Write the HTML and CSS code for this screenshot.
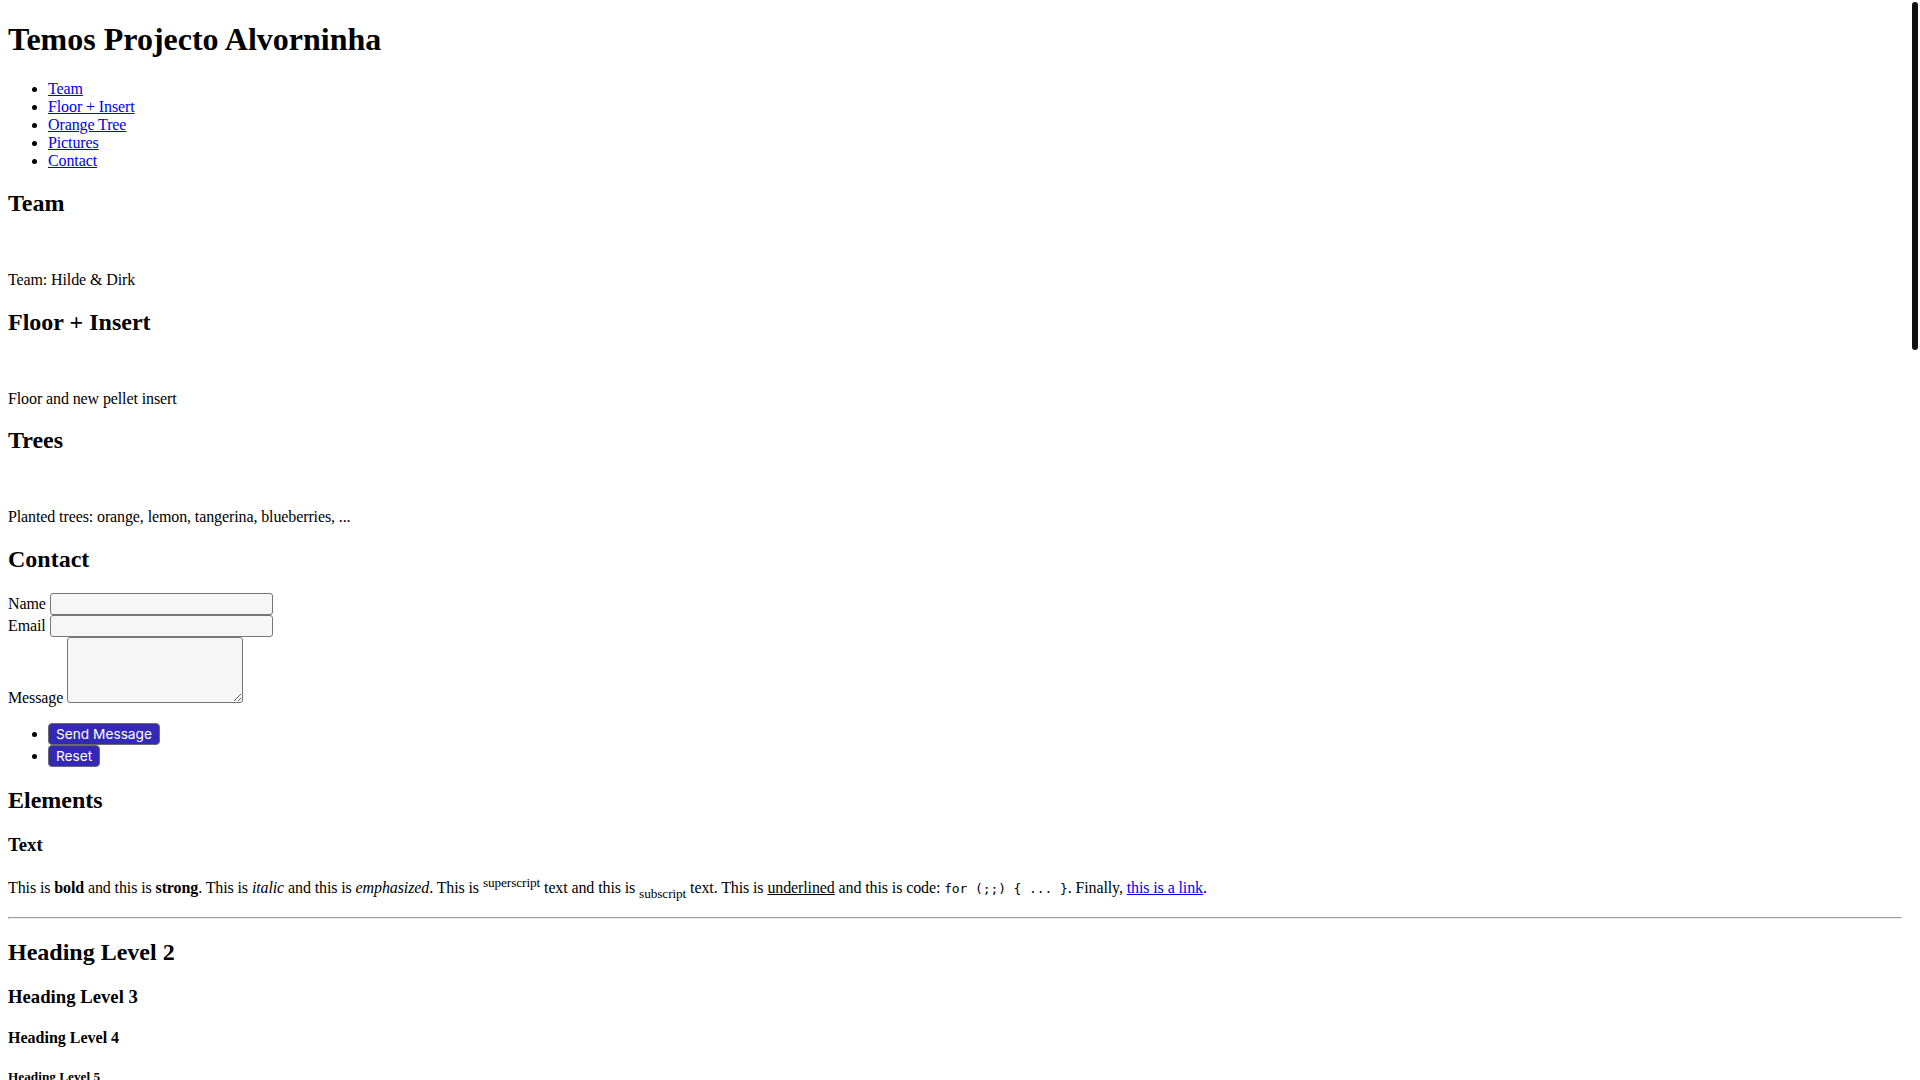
FILE: index.html
```html
<!DOCTYPE html>
<html lang="pt">
<head>
<meta charset="utf-8">
<title>Temos Projecto Alvorninha</title>
<link rel="stylesheet" href="styles.css">
</head>
<body>
<header class="site-header">
  <h1>Temos Projecto Alvorninha</h1>
  <nav>
    <ul>
      <li><a href="#team">Team</a></li>
      <li><a href="#floor">Floor + Insert</a></li>
      <li><a href="#trees">Orange Tree</a></li>
      <li><a href="#pictures">Pictures</a></li>
      <li><a href="#contact">Contact</a></li>
    </ul>
  </nav>
</header>

<main>
  <article id="team">
    <h2>Team</h2>
    <p class="image-slot"><span class="photo"></span></p>
    <p>Team: Hilde &amp; Dirk</p>
  </article>

  <article id="floor">
    <h2>Floor + Insert</h2>
    <p class="image-slot"><span class="photo"></span></p>
    <p>Floor and new pellet insert</p>
  </article>

  <article id="trees">
    <h2>Trees</h2>
    <p class="image-slot"><span class="photo"></span></p>
    <p>Planted trees: orange, lemon, tangerina, blueberries, ...</p>
  </article>

  <article id="contact">
    <h2>Contact</h2>
    <form method="post" action="#">
      <div class="fields">
        <div class="field"><label for="name">Name</label> <input type="text" name="name" id="name" class="text-input"></div>
        <div class="field"><label for="email">Email</label> <input type="email" name="email" id="email" class="text-input"></div>
        <div class="field"><label for="message">Message</label> <textarea name="message" id="message" rows="4" class="text-area"></textarea></div>
      </div>
      <ul class="actions">
        <li><input type="submit" value="Send Message" class="btn"></li>
        <li><input type="reset" value="Reset" class="btn"></li>
      </ul>
    </form>
  </article>

  <article id="elements">
    <h2>Elements</h2>
    <section>
      <h3>Text</h3>
      <p>This is <b>bold</b> and this is <strong>strong</strong>. This is <i>italic</i> and this is <em>emphasized</em>. This is <sup>superscript</sup> text and this is <sub>subscript</sub> text. This is <u>underlined</u> and this is code: <code>for (;;) { ... }</code>. Finally, <a href="#">this is a link</a>.</p>
      <hr>
      <h2>Heading Level 2</h2>
      <h3>Heading Level 3</h3>
      <h4>Heading Level 4</h4>
      <h5>Heading Level 5</h5>
      <h6>Heading Level 6</h6>
      <hr>
      <h4>Blockquote</h4>
      <blockquote>Fringilla nisl. Donec accumsan interdum nisi, quis tincidunt felis sagittis eget tempus euismod. Vestibulum ante ipsum primis in faucibus vestibulum. Blandit adipiscing eu felis iaculis volutpat ac adipiscing accumsan faucibus. Vestibulum ante ipsum primis in faucibus lorem ipsum dolor sit amet nullam adipiscing eu felis.</blockquote>
      <h4>Preformatted</h4>
<pre><code>i = 0;

while (!deck.isInOrder()) {
    print 'Iteration ' + i;
    deck.shuffle();
    i++;
}

print 'It took ' + i + ' iterations to sort the deck.';</code></pre>
    </section>

    <section>
      <h3>Lists</h3>
      <h4>Unordered</h4>
      <ul>
        <li>Dolor pulvinar etiam.</li>
        <li>Sagittis adipiscing.</li>
        <li>Felis enim feugiat.</li>
      </ul>
      <h4>Alternate</h4>
      <ul>
        <li>Dolor pulvinar etiam.</li>
        <li>Sagittis adipiscing.</li>
        <li>Felis enim feugiat.</li>
      </ul>
      <h4>Ordered</h4>
      <ol>
        <li>Dolor pulvinar etiam.</li>
        <li>Etiam vel felis viverra.</li>
        <li>Felis enim feugiat.</li>
        <li>Dolor pulvinar etiam.</li>
        <li>Etiam vel felis lorem.</li>
        <li>Felis enim et feugiat.</li>
      </ol>
      <h4>Icons</h4>
      <ul>
        <li><a href="#">Twitter</a></li>
        <li><a href="#">Facebook</a></li>
        <li><a href="#">Instagram</a></li>
        <li><a href="#">GitHub</a></li>
      </ul>
      <h4>Actions</h4>
      <ul>
        <li><a href="#">Primary</a></li>
        <li><a href="#">Default</a></li>
      </ul>
      <ul>
        <li><a href="#">Primary</a></li>
        <li><a href="#">Default</a></li>
      </ul>
    </section>

    <section>
      <h3>Table</h3>
      <h4>Default</h4>
      <table>
        <thead>
          <tr><th>Name</th><th>Description</th><th>Price</th></tr>
        </thead>
        <tbody>
          <tr><td>Item One</td><td>Ante turpis integer aliquet porttitor.</td><td>29.99</td></tr>
          <tr><td>Item Two</td><td>Vis ac commodo adipiscing arcu aliquet.</td><td>19.99</td></tr>
          <tr><td>Item Three</td><td>Morbi faucibus arcu accumsan lorem.</td><td>29.99</td></tr>
          <tr><td>Item Four</td><td>Vitae integer tempus condimentum.</td><td>19.99</td></tr>
          <tr><td>Item Five</td><td>Ante turpis integer aliquet porttitor.</td><td>29.99</td></tr>
        </tbody>
        <tfoot>
          <tr><td colspan="2"></td><td>100.00</td></tr>
        </tfoot>
      </table>
      <h4>Alternate</h4>
      <table>
        <thead>
          <tr><th>Name</th><th>Description</th><th>Price</th></tr>
        </thead>
        <tbody>
          <tr><td>Item One</td><td>Ante turpis integer aliquet porttitor.</td><td>29.99</td></tr>
          <tr><td>Item Two</td><td>Vis ac commodo adipiscing arcu aliquet.</td><td>19.99</td></tr>
          <tr><td>Item Three</td><td>Morbi faucibus arcu accumsan lorem.</td><td>29.99</td></tr>
          <tr><td>Item Four</td><td>Vitae integer tempus condimentum.</td><td>19.99</td></tr>
          <tr><td>Item Five</td><td>Ante turpis integer aliquet porttitor.</td><td>29.99</td></tr>
        </tbody>
        <tfoot>
          <tr><td colspan="2"></td><td>100.00</td></tr>
        </tfoot>
      </table>
    </section>

    <section>
      <h3>Buttons</h3>
      <ul>
        <li><a href="#">Primary</a></li>
        <li><a href="#">Default</a></li>
      </ul>
      <ul>
        <li><a href="#">Primary</a></li>
        <li><a href="#">Default</a></li>
      </ul>
      <ul>
        <li><span>Primary</span></li>
        <li><span>Default</span></li>
      </ul>
    </section>

    <section>
      <h3>Form</h3>
      <form method="post" action="#">
        <div class="fields">
          <div class="field"><label for="demo-name">Name</label> <input type="text" name="demo-name" id="demo-name" class="text-input"></div>
          <div class="field"><label for="demo-email">Email</label> <input type="email" name="demo-email" id="demo-email" class="text-input"></div>
          <div class="field"><label for="demo-category">Category</label>
            <select name="demo-category" id="demo-category">
              <option value="">-</option>
              <option value="1">Manufacturing</option>
              <option value="1">Shipping</option>
              <option value="1">Administration</option>
              <option value="1">Human Resources</option>
            </select>
          </div>
          <div class="field"><input type="radio" id="demo-priority-low" name="demo-priority" checked><label for="demo-priority-low">Low</label></div>
          <div class="field"><input type="radio" id="demo-priority-high" name="demo-priority"><label for="demo-priority-high">High</label></div>
          <div class="field"><input type="checkbox" id="demo-copy" name="demo-copy"><label for="demo-copy">Email me a copy</label></div>
          <div class="field"><input type="checkbox" id="demo-human" name="demo-human" checked><label for="demo-human">Not a robot</label></div>
          <div class="field"><textarea name="demo-message" id="demo-message" placeholder="Enter your message" rows="6" class="text-area"></textarea></div>
        </div>
        <ul class="actions">
          <li><input type="submit" value="Send Message" class="btn"></li>
          <li><input type="reset" value="Reset" class="btn"></li>
        </ul>
      </form>
    </section>
  </article>
</main>

<footer>
  <p>&copy; Temos Projecto Alvorninha.</p>
</footer>

<div class="scrollbar" aria-hidden="true"><div class="scrollbar-thumb"></div></div>
</body>
</html>
```

FILE: styles.css
```css
body {
  margin: 8px 18px 8px 8px;
  font-family: "Liberation Serif", serif;
  color: #000;
  background: #fff;
  letter-spacing: -0.11px;
}

h1, h2, h3, h4, h5, h6 {
  letter-spacing: normal;
}

.site-header h1 {
  margin-top: 13.44px;
}

.image-slot .photo {
  display: inline-block;
  width: 0;
  height: 0;
}

.text-input {
  box-sizing: border-box;
  width: 223px;
  height: 22px;
  background: #f6f6f6;
  border: 1px solid #767676;
  border-radius: 3px;
}

.text-area {
  box-sizing: border-box;
  width: 176px;
  height: 66px;
  background: #f6f6f6;
  border: 1px solid #767676;
  border-radius: 3px;
}

.btn {
  font-family: Inter, "DejaVu Sans", sans-serif;
  font-size: 13.7px;
  letter-spacing: normal;
  background-color: #3329b4;
  color: #fff;
  border: 1px solid #6b6b6b;
  border-radius: 4px;
  padding: 2px 7px;
}

.scrollbar {
  position: fixed;
  top: 0;
  right: 0;
  width: 10px;
  height: 100vh;
  background: #fff;
}

.scrollbar-thumb {
  margin: 2px 2px 0 2px;
  height: 348px;
  background: #111;
  border-radius: 3px;
}
```
